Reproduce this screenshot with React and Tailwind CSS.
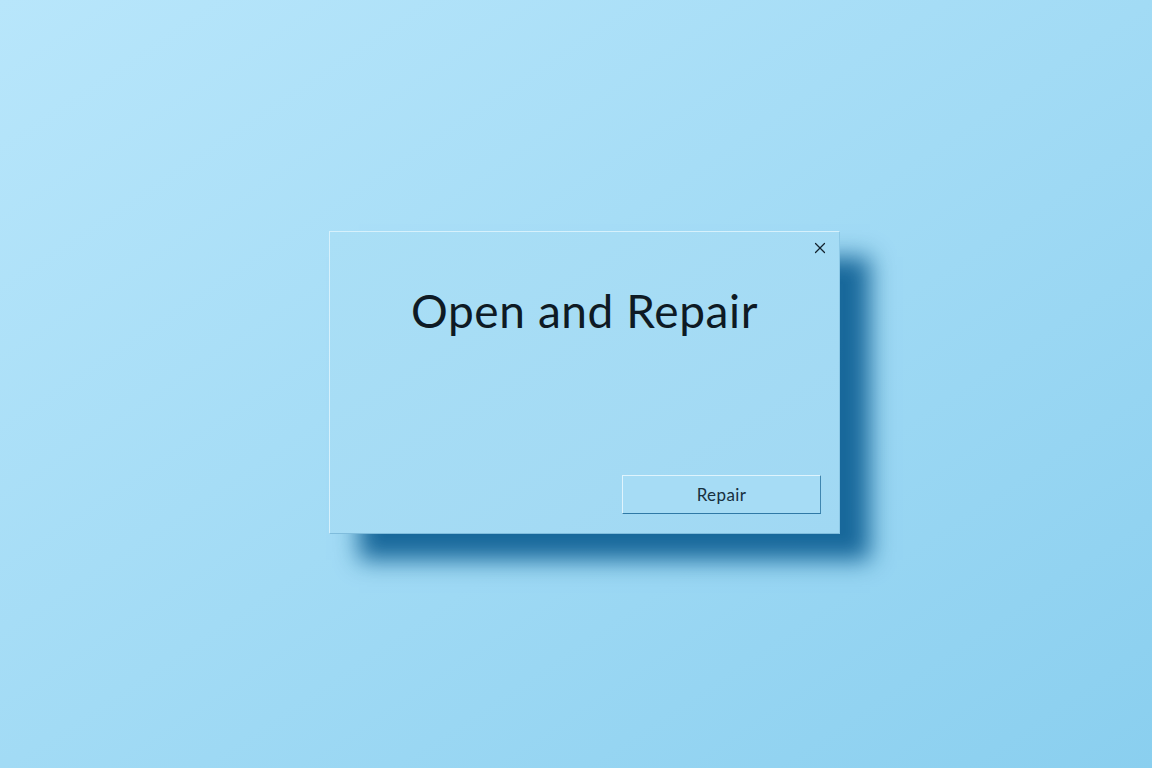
import React from 'react';
import { X } from 'lucide-react';

export default function App() {
  return (
    <div className="min-h-screen w-full bg-gradient-to-br from-[#b8e6fb] via-[#a2dbf5] to-[#8acfef] pl-[329px] pt-[231px] font-['Lato','Open_Sans',sans-serif]">
      <div className="relative flex h-[303px] w-[511px] flex-col border border-t-[#d6f1fc] border-l-[#d6f1fc] border-r-[#8cc8e6] border-b-[#7fbcdc] bg-gradient-to-br from-[#aadff6] to-[#a0d8f3] shadow-[30px_26px_22px_rgba(10,92,145,0.9)]">
        <button className="absolute right-[9px] top-[6px] flex h-[20px] w-[20px] items-center justify-center text-[#14232e]">
          <X className="h-[18px] w-[18px]" strokeWidth={1.6} />
        </button>
        <h1 className="mt-[56px] text-center text-[46px] font-normal leading-none tracking-[0.6px] text-[#0e1a24]">
          Open and Repair
        </h1>
        <div className="mt-auto flex justify-end pb-[19px] pr-[18px]">
          <button className="h-[39px] w-[199px] border border-t-[#dff4fd] border-l-[#dff4fd] border-r-[#3f86b0] border-b-[#2f79a6] bg-[#a6dcf5] text-[17px] font-normal tracking-[0.4px] text-[#17303f]">
            Repair
          </button>
        </div>
      </div>
    </div>
  );
}
